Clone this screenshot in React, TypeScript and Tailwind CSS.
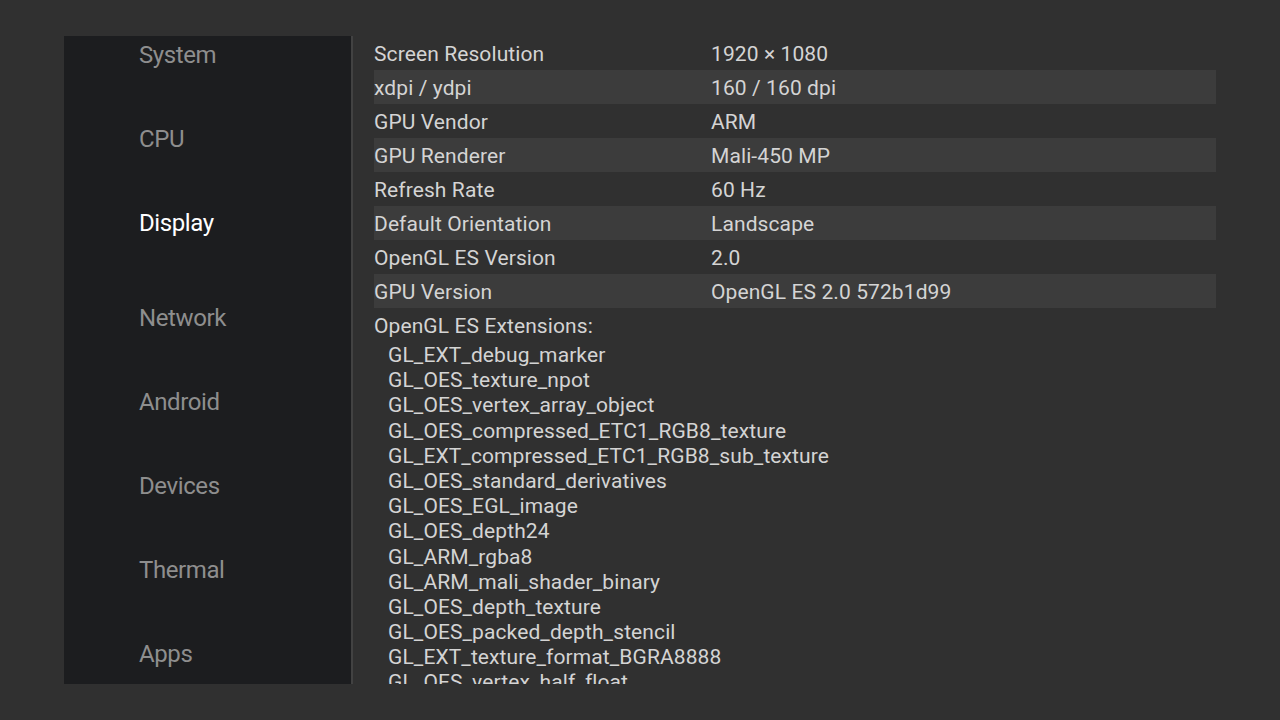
import React from 'react';

const NAV = ['System', 'CPU', 'Display', 'Network', 'Android', 'Devices', 'Thermal', 'Apps'];

const ROWS: [string, string][] = [
  ['Screen Resolution', '1920 × 1080'],
  ['xdpi / ydpi', '160 / 160 dpi'],
  ['GPU Vendor', 'ARM'],
  ['GPU Renderer', 'Mali-450 MP'],
  ['Refresh Rate', '60 Hz'],
  ['Default Orientation', 'Landscape'],
  ['OpenGL ES Version', '2.0'],
  ['GPU Version', 'OpenGL ES 2.0 572b1d99'],
];

const EXTENSIONS = [
  'GL_EXT_debug_marker',
  'GL_OES_texture_npot',
  'GL_OES_vertex_array_object',
  'GL_OES_compressed_ETC1_RGB8_texture',
  'GL_EXT_compressed_ETC1_RGB8_sub_texture',
  'GL_OES_standard_derivatives',
  'GL_OES_EGL_image',
  'GL_OES_depth24',
  'GL_ARM_rgba8',
  'GL_ARM_mali_shader_binary',
  'GL_OES_depth_texture',
  'GL_OES_packed_depth_stencil',
  'GL_EXT_texture_format_BGRA8888',
  'GL_OES_vertex_half_float',
];

const App = () => {
  return (
    <div className="w-[1280px] h-[720px] bg-[#303030] flex pt-[36px] pl-[64px] font-['Roboto',sans-serif]">
      <div className="flex h-[648px]">
        {/* Sidebar */}
        <div className="w-[287px] h-full bg-[#1c1d1f] overflow-hidden">
          <div className="flex flex-col -mt-[23px]">
            {NAV.map((item) => (
              <div
                key={item}
                className={`h-[84px] shrink-0 flex items-center pl-[75px] text-[24px] tracking-[-0.4px] ${
                  item === 'Display' ? 'text-white mb-[11px]' : 'text-[#8e8e8e]'
                }`}
              >
                {item}
              </div>
            ))}
          </div>
        </div>
        <div className="w-[2px] h-full bg-[#424242]" />

        {/* Content */}
        <div className="w-[863px] h-full overflow-hidden pl-[21px] text-[21px] tracking-[0.1px] text-[#d4d4d4]">
          <div className="w-[842px]">
            {ROWS.map(([label, value], i) => (
              <div
                key={label}
                className={`h-[34px] flex items-center pt-[3px] ${i % 2 === 1 ? 'bg-[#3c3c3c]' : ''}`}
              >
                <div className="w-[337px] shrink-0">{label}</div>
                <div>{value}</div>
              </div>
            ))}
            <div className="h-[34px] flex items-center pt-[3px]">OpenGL ES Extensions:</div>
            <div className="pl-[14px] pt-[1px]">
              {EXTENSIONS.map((ext) => (
                <div key={ext} className="h-[25.2px] leading-[25.2px]">
                  {ext}
                </div>
              ))}
            </div>
          </div>
        </div>
      </div>
    </div>
  );
};

export default App;
